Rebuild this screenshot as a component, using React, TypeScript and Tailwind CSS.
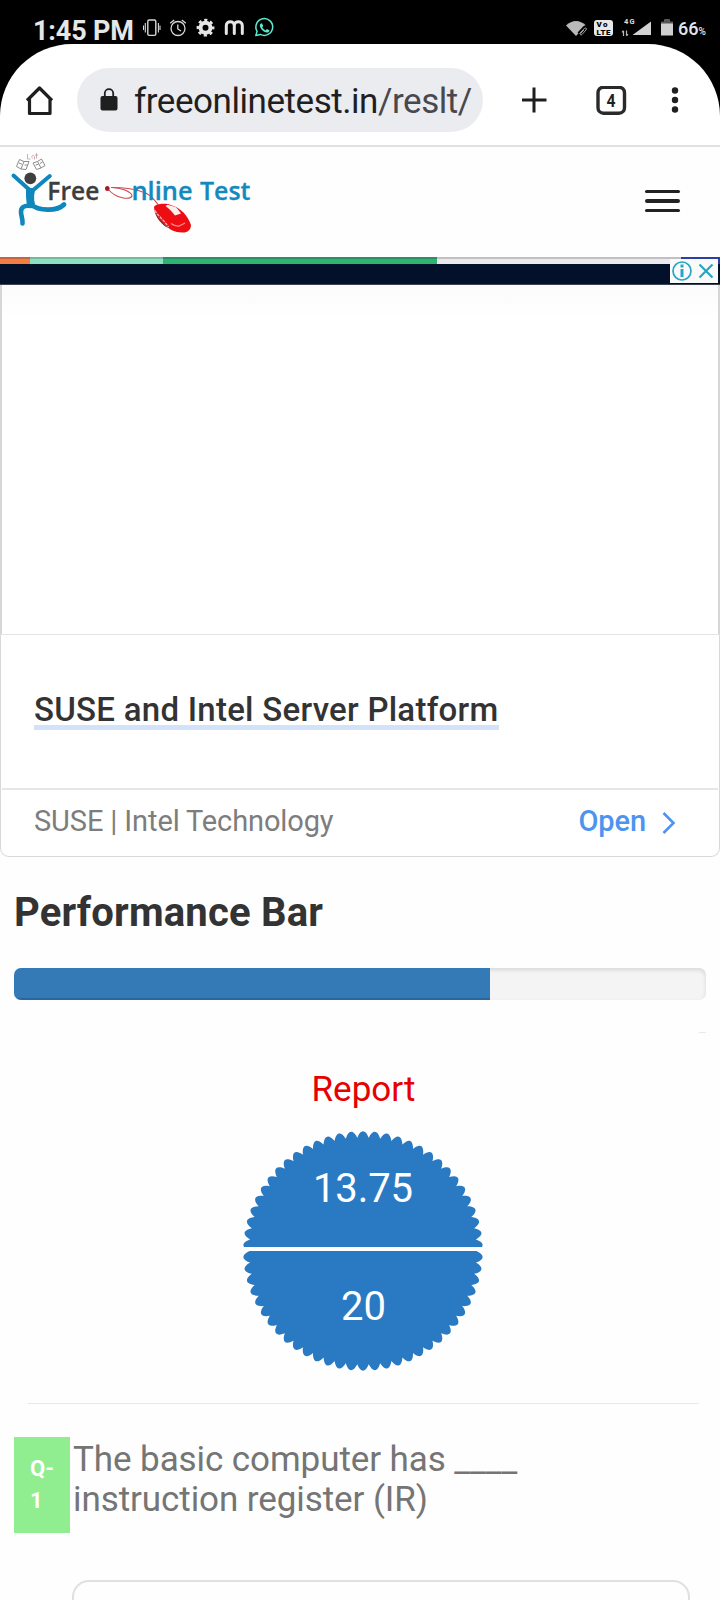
import React from "react";

const TEETH = 62;

// Scalloped seal: rounded tips with sharp valleys.
function sealPath(cx: number, cy: number, outer: number, inner: number) {
  const step = (Math.PI * 2) / TEETH;
  const point = (r: number, a: number) =>
    `${(cx + r * Math.sin(a)).toFixed(2)} ${(cy - r * Math.cos(a)).toFixed(2)}`;
  let d = `M${point(inner, -step / 2)}`;
  for (let i = 0; i < TEETH; i++) {
    const a = i * step;
    d += `C${point(outer + 2, a - step * 0.2)} ${point(outer + 2, a + step * 0.2)} ${point(inner, a + step / 2)}`;
  }
  return d + "Z";
}

function StatusBar() {
  return (
    <div className="flex h-[44px] shrink-0 items-start bg-black pl-[33px] text-[#e6e6e6]">
      <div className="mt-[14px] w-[110px] whitespace-nowrap text-[27px] leading-[34px] font-bold tracking-[-0.15px]">1:45 PM</div>
      <svg className="mt-[16px] h-[24px] w-[132px]" viewBox="143 16 132 24" fill="none" stroke="#d8d8d8">
        <rect x="147.8" y="20" width="8" height="15.4" rx="1.4" strokeWidth="1.4" />
        <path d="M145.3 23v9.5M158.4 23v9.5M143.5 25.500v4.500M160 25.500v4.500" strokeWidth="1.1" />
        <circle cx="178" cy="28.500" r="7" strokeWidth="1.3" />
        <path d="M177.800 24.500v4.500l3.200 2M170.200 23.300l4-3.400M185.800 23.300l-4-3.400" strokeWidth="1.3" />
        <circle cx="205.500" cy="27.700" r="5" stroke="#e6e6e6" strokeWidth="4" />
        <circle cx="205.500" cy="27.700" r="7.600" stroke="#e6e6e6" strokeWidth="2.600" strokeDasharray="3.100 2.870" strokeDashoffset="1.500" />
        <path d="M226.300 33.500v-8c0-5 8-5 8 0v8M234.300 25.500c0-5 8-5 8 0v8" stroke="#e6e6e6" strokeWidth="3" strokeLinecap="round" />
        <path d="M255.800 35.600l1.300-4.300a8.400 8.400 0 1 1 3.300 3.100z" stroke="#5fe8cf" strokeWidth="1.500" strokeLinejoin="round" />
        <path d="M260.500 23.700l1.500-.4 1.200 2.700-1 1.300c.9 1.700 1.900 2.500 3.500 3.100l1.200-1.300 2.500 1.200c0 1.500-1.300 2.400-2.500 2.300-3.500-.4-6.900-4.200-7.100-6.800 0-.9.200-1.600.7-2.100z" fill="#5fe8cf" stroke="none" />
      </svg>
      <svg className="mt-[14px] ml-[291px] h-[26px] w-[110px]" viewBox="566 14 110 26">
        <path d="M566 25.500c6-6 14-6 20 0l-10 10.500z" fill="#b9b9b9" />
        <path d="M578.500 33.500l6-6.500c1.500-1 3 .5 2 2l-4.500 5c-1.500 1-2.500 0-1.500-1.500l3.500-3.500" fill="none" stroke="#000" strokeWidth="2.600" />
        <path d="M579.500 33.500l5-5.200c1.500-1 2.500.3 1.500 1.700l-4 4.500c-1.200 1-2.200 0-1.200-1.300l3-3.200" fill="none" stroke="#a5a5a5" strokeWidth="1" />
        <rect x="594" y="20" width="19" height="16" rx="3" fill="#e8e8e8" />
        <text x="596.500" y="27.400" fontFamily="Roboto, sans-serif" fontWeight="900" fontSize="8" textLength="11" fill="#000">Vo</text>
        <text x="596.500" y="34.700" fontFamily="Roboto, sans-serif" fontWeight="900" fontSize="8" textLength="14" fill="#000">LTE</text>
        <text x="624" y="24.300" fontFamily="Roboto, sans-serif" fontWeight="700" fontSize="7.500" textLength="10.500" fill="#ddd">4G</text>
        <path d="M623.500 36v-5M622 32.300l1.500-1.600M626.500 30.500v5M628 34.200l-1.500 1.600" stroke="#bbb" strokeWidth="1.200" fill="none" />
        <path d="M632.500 35H651V21.500z" fill="#d2d2d2" />
        <path d="M661 22h3.500v-2.500h5V22h3.500v13.500h-12z" fill="#cfcfcf" />
        <path d="M661 21.500h3.500v-2.200h5v2.200h3.500v2h-12z" fill="#555" />
      </svg>
      <div className="mt-[18px] ml-[2px] flex items-baseline whitespace-nowrap font-medium">
        <span className="text-[18px] leading-[22px]">66</span>
        <span className="text-[10px]">%</span>
      </div>
    </div>
  );
}

function BrowserBar() {
  return (
    <div className="shrink-0 bg-black">
      <div className="flex h-[103px] items-start rounded-t-[72px] border-b-2 border-[#e0e0e0] bg-white">
        <svg className="mt-[40px] ml-[24px] h-[34px] w-[32px]" viewBox="24 84 32 34" fill="none" stroke="#1f1f1f" strokeWidth="3.200" strokeLinejoin="round">
          <path d="M27 100.500L39.500 88 52 100.500M29.500 99v14.500h20.500V99" />
        </svg>
        <div className="mt-[24px] ml-[21px] flex h-[64px] w-[406px] items-center rounded-full bg-[#ebecf0] pl-[23px]">
          <svg className="h-[24px] w-[18px]" viewBox="0 0 18 24">
            <rect x="0.500" y="8" width="17" height="14.500" rx="2" fill="#1f1f1f" />
            <path d="M4.800 9V5.300a4.200 4.200 0 0 1 8.400 0V9" fill="none" stroke="#1f1f1f" strokeWidth="1.800" />
          </svg>
          <div className="ml-[16px] pt-[4px] whitespace-nowrap text-[35px] leading-[48px] tracking-[-0.45px] text-[#1f1f1f]">
            freeonlinetest.in<span className="text-[#48494c]">/reslt/</span>
          </div>
        </div>
        <svg className="mt-[42px] ml-[37px] h-[30px] w-[170px]" viewBox="520 86 170 30">
          <path d="M522 100h24.500M534 87.500v25" stroke="#1f1f1f" strokeWidth="3" />
          <rect x="598" y="87.200" width="26.500" height="26" rx="5.500" fill="none" stroke="#2a2a2a" strokeWidth="3.400" />
          <text x="611" y="106.500" textAnchor="middle" fontFamily="Roboto, sans-serif" fontWeight="700" fontSize="18.500" textLength="9" lengthAdjust="spacingAndGlyphs" fill="#1f1f1f">4</text>
          <circle cx="675" cy="90.500" r="3.200" fill="#1f1f1f" />
          <circle cx="675" cy="100" r="3.200" fill="#1f1f1f" />
          <circle cx="675" cy="109.500" r="3.200" fill="#1f1f1f" />
        </svg>
      </div>
    </div>
  );
}

function Logo() {
  return (
    <svg className="h-[90px] w-[250px]" viewBox="5 150 250 90" fill="none">
      <g stroke="#808080" strokeWidth="0.900">
        <path d="M19.500 159.500l4.500 2-3 7.500-4.500-2.500zM24 161.500l5 0-3 8-5-.5M19 163l3 1.200M24.500 165l3 0" />
        <path d="M33 163l4.500-1.500 3.500 6.500-4.500 1.500zM37.500 161.500l4-2.500 3.500 6.500-4 2.500M35.500 165l3-.8M40 163.500l2.500-1.500" />
      </g>
      <path d="M27.500 154v5h3M32.500 158.500c-2-3 1-4 2-2v3M36.500 153v5.500M35 155h3" stroke="#c9a5a8" strokeWidth="0.900" />
      <path d="M13.500 175.500L29 189.500M49.800 176L34.500 189" stroke="#0f87bd" strokeWidth="4" strokeLinecap="round" />
      <circle cx="30.300" cy="178.300" r="5.900" fill="#3f3f3f" />
      <path d="M26 187q5.500 2 10.500 0-4 8-1.500 17l-8 2.500q-1.500-10-1-19.500z" fill="#0f87bd" />
      <path d="M30 204c9 7.500 27 7.500 34 .5" stroke="#0f87bd" strokeWidth="4.800" strokeLinecap="round" />
      <path d="M31 206c-8-1-10 2-10 6 0 4 2 7 1.500 11.500" stroke="#0f87bd" strokeWidth="4.600" strokeLinecap="round" strokeLinejoin="round" />
      <text x="47.300" y="200" fontFamily="'Open Sans', sans-serif" fontWeight="600" fontSize="25.500" textLength="52" lengthAdjust="spacingAndGlyphs" fill="#3d3d3d" stroke="#3d3d3d" strokeWidth="0.300">Free</text>
      <path d="M108 189c8 10 22 11 24 7 0-4-12-9-21-8.500" stroke="#cf4a50" strokeWidth="1.100" />
      <path d="M111 187.500c12 0 26 2 33 5 7 2 10 7 14 12" stroke="#cf4a50" strokeWidth="1.100" />
      <ellipse cx="107.300" cy="188.500" rx="2.300" ry="2.600" fill="#a91a22" />
      <text x="131.500" y="200" fontFamily="'Open Sans', sans-serif" fontWeight="600" fontSize="25.500" textLength="61" lengthAdjust="spacingAndGlyphs" fill="#1489bd" stroke="#1489bd" strokeWidth="0.300">nline</text>
      <text x="200" y="200" fontFamily="'Open Sans', sans-serif" fontWeight="600" fontSize="25.500" textLength="50.500" lengthAdjust="spacingAndGlyphs" fill="#1489bd" stroke="#1489bd" strokeWidth="0.300">Test</text>
      <path d="M154 207c1-3 8-4 14-3l8 3c8 4 13 12 15 18 0 5-4 8-9 7.500-7 0-13-3-16-7-5-5-12-12-12-18.500z" fill="#ed0d12" />
      <path d="M154.500 210c2 6 7 10 11 15l2.500 3c-6-3-13-11-13.500-18z" fill="#8e2227" />
      <path d="M155 210.500c3 6 9 9 13.500 16.500" stroke="#eebcbc" strokeWidth="1.300" strokeDasharray="3 1" />
      <path d="M167.500 204.800l8 2.200c2 1.500 4 4 5.500 6.500l-6 2c-3-4-6-7-9.500-9.500z" fill="#fbeeee" />
      <path d="M171 223.500q4 3 8 2.500l6-3" stroke="#ff8a8a" strokeWidth="1.300" />
    </svg>
  );
}

function SiteHeader() {
  return (
    <div className="flex h-[110px] shrink-0 items-start pl-[5px]">
      <div className="mt-[3px]">
        <Logo />
      </div>
      <div className="mt-[43px] ml-[390px] flex h-[22px] w-[35px] flex-col justify-between">
        <span className="h-[3px] rounded-sm bg-[#222]" />
        <span className="h-[4px] rounded-sm bg-[#222]" />
        <span className="h-[3px] rounded-sm bg-[#222]" />
      </div>
    </div>
  );
}

function AdCard() {
  return (
    <div className="relative flex h-[600px] shrink-0 flex-col">
      <div className="flex h-[7px] shrink-0">
        <div className="w-[30px] border-t-2 border-[#c7653b] bg-[#f47c45]" />
        <div className="w-[133px] border-t-2 border-[#73b89f] bg-[#8be2c1]" />
        <div className="w-[274px] border-t-2 border-[#299062] bg-[#30b272]" />
        <div className="w-[244px] border-t-2 border-[#c3c0c3] bg-[#ebe9ed]" />
        <div className="flex-1 bg-[#2b3fa5]" />
      </div>
      <div className="h-[21px] shrink-0 border-b border-[#3c4454] bg-[#021029]" />
      <div className="h-[349px] shrink-0 border-x-2 border-[#d6d6d6] bg-linear-to-b from-[#fbfbfb] to-white to-10%" />
      <div className="flex flex-1 flex-col rounded-b-[9px] border border-[#d8d8d8] border-t-[#e4e4e4] bg-white">
        <div className="mx-px flex h-[155px] items-start border-b-2 border-[#e6e6e6] pl-[32px]">
          <div className="mt-[56px] h-[39px] border-b-[5px] border-[#d2e3f9] text-[33px] leading-[38px] font-medium tracking-[0.26px] whitespace-nowrap text-[#333]">
            SUSE and Intel Server Platform
          </div>
        </div>
        <div className="flex flex-1 items-center pr-[43px] pl-[33px] text-[29px] whitespace-nowrap">
          <span className="pb-[2px] tracking-[-0.12px] text-[#7d7d7d]">SUSE | Intel Technology</span>
          <span className="ml-auto pb-[2px] font-medium tracking-[-0.1px] text-[#4d94ee]">Open</span>
          <svg className="ml-[16px] h-[24px] w-[14px]" viewBox="0 0 14 24" fill="none" stroke="#4d94ee" strokeWidth="2.600">
            <path d="M1.500 2l10 10-10 10" />
          </svg>
        </div>
      </div>
      <div className="absolute top-[2px] right-[2px] h-[24px] w-[48px] bg-[#fafafa]">
        <svg className="h-[24px] w-[48px]" viewBox="0 0 48 24" fill="none" stroke="#26a5c4">
          <circle cx="12" cy="12" r="9" strokeWidth="1.700" />
          <path d="M12 5.500v3M12 10v8" strokeWidth="3" />
          <path d="M29.500 5.500l13 13M42.500 5.500l-13 13" strokeWidth="2.200" />
        </svg>
      </div>
    </div>
  );
}

function Report() {
  const d = sealPath(120, 120, 120, 113.5);
  return (
    <div className="mr-[21px] ml-[28px] flex h-[371px] shrink-0 flex-col items-center border-b border-[#e8e8e8]">
      <div className="mt-[33px] h-[48px] text-[35px] leading-[48px] text-[#e60000]">Report</div>
      <svg className="mt-[17px] mr-px h-[240px] w-[240px]" viewBox="0 0 240 240">
        <path d={d} fill="#2a7ac3" />
        <rect x="0" y="116" width="240" height="4" fill="#fff" />
        <text x="120" y="71" textAnchor="middle" fontFamily="Roboto, sans-serif" fontSize="40" textLength="100" fill="#fff">13.75</text>
        <text x="120.500" y="189" textAnchor="middle" fontFamily="Roboto, sans-serif" fontSize="40" fill="#fff">20</text>
      </svg>
    </div>
  );
}

export default function App() {
  return (
    <div className="flex h-[1600px] w-[720px] flex-col overflow-hidden bg-[#fefefe] font-['Roboto',sans-serif]">
      <StatusBar />
      <BrowserBar />
      <SiteHeader />
      <AdCard />
      <div className="h-[111px] shrink-0 pt-[32px] pl-[14px] text-[40px] leading-[48px] font-bold tracking-[0.2px] text-[#333]">
        Performance Bar
      </div>
      <div className="mx-[14px] flex h-[32px] shrink-0 overflow-hidden rounded-[7px] bg-[#f4f4f4] shadow-[inset_0_2px_4px_rgba(0,0,0,0.12)]">
        <div className="w-[476px] bg-[#337ab7] shadow-[inset_0_-2px_0_rgba(0,0,0,0.15)]" />
      </div>
      <div className="mt-[32px] mr-[14px] h-px w-[7px] shrink-0 self-end bg-[#e8e8e8]" />
      <Report />
      <div className="mx-[14px] mt-[33px] flex h-[96px] shrink-0">
        <div className="w-[56px] bg-[#90ee90] pt-[16px] pl-[16px] text-[22px] leading-[32px] font-bold text-white">
          Q-
          <br />1
        </div>
        <div className="pt-[3px] pl-[3px] text-[35px] leading-[40px] tracking-[-0.08px] whitespace-nowrap text-[#757575]">
          The basic computer has ____
          <br />
          instruction register (IR)
        </div>
      </div>
      <div className="mr-[30px] ml-[72px] mt-[47px] h-[60px] shrink-0 rounded-[17px] border-2 border-[#e0e0e0]" />
    </div>
  );
}
